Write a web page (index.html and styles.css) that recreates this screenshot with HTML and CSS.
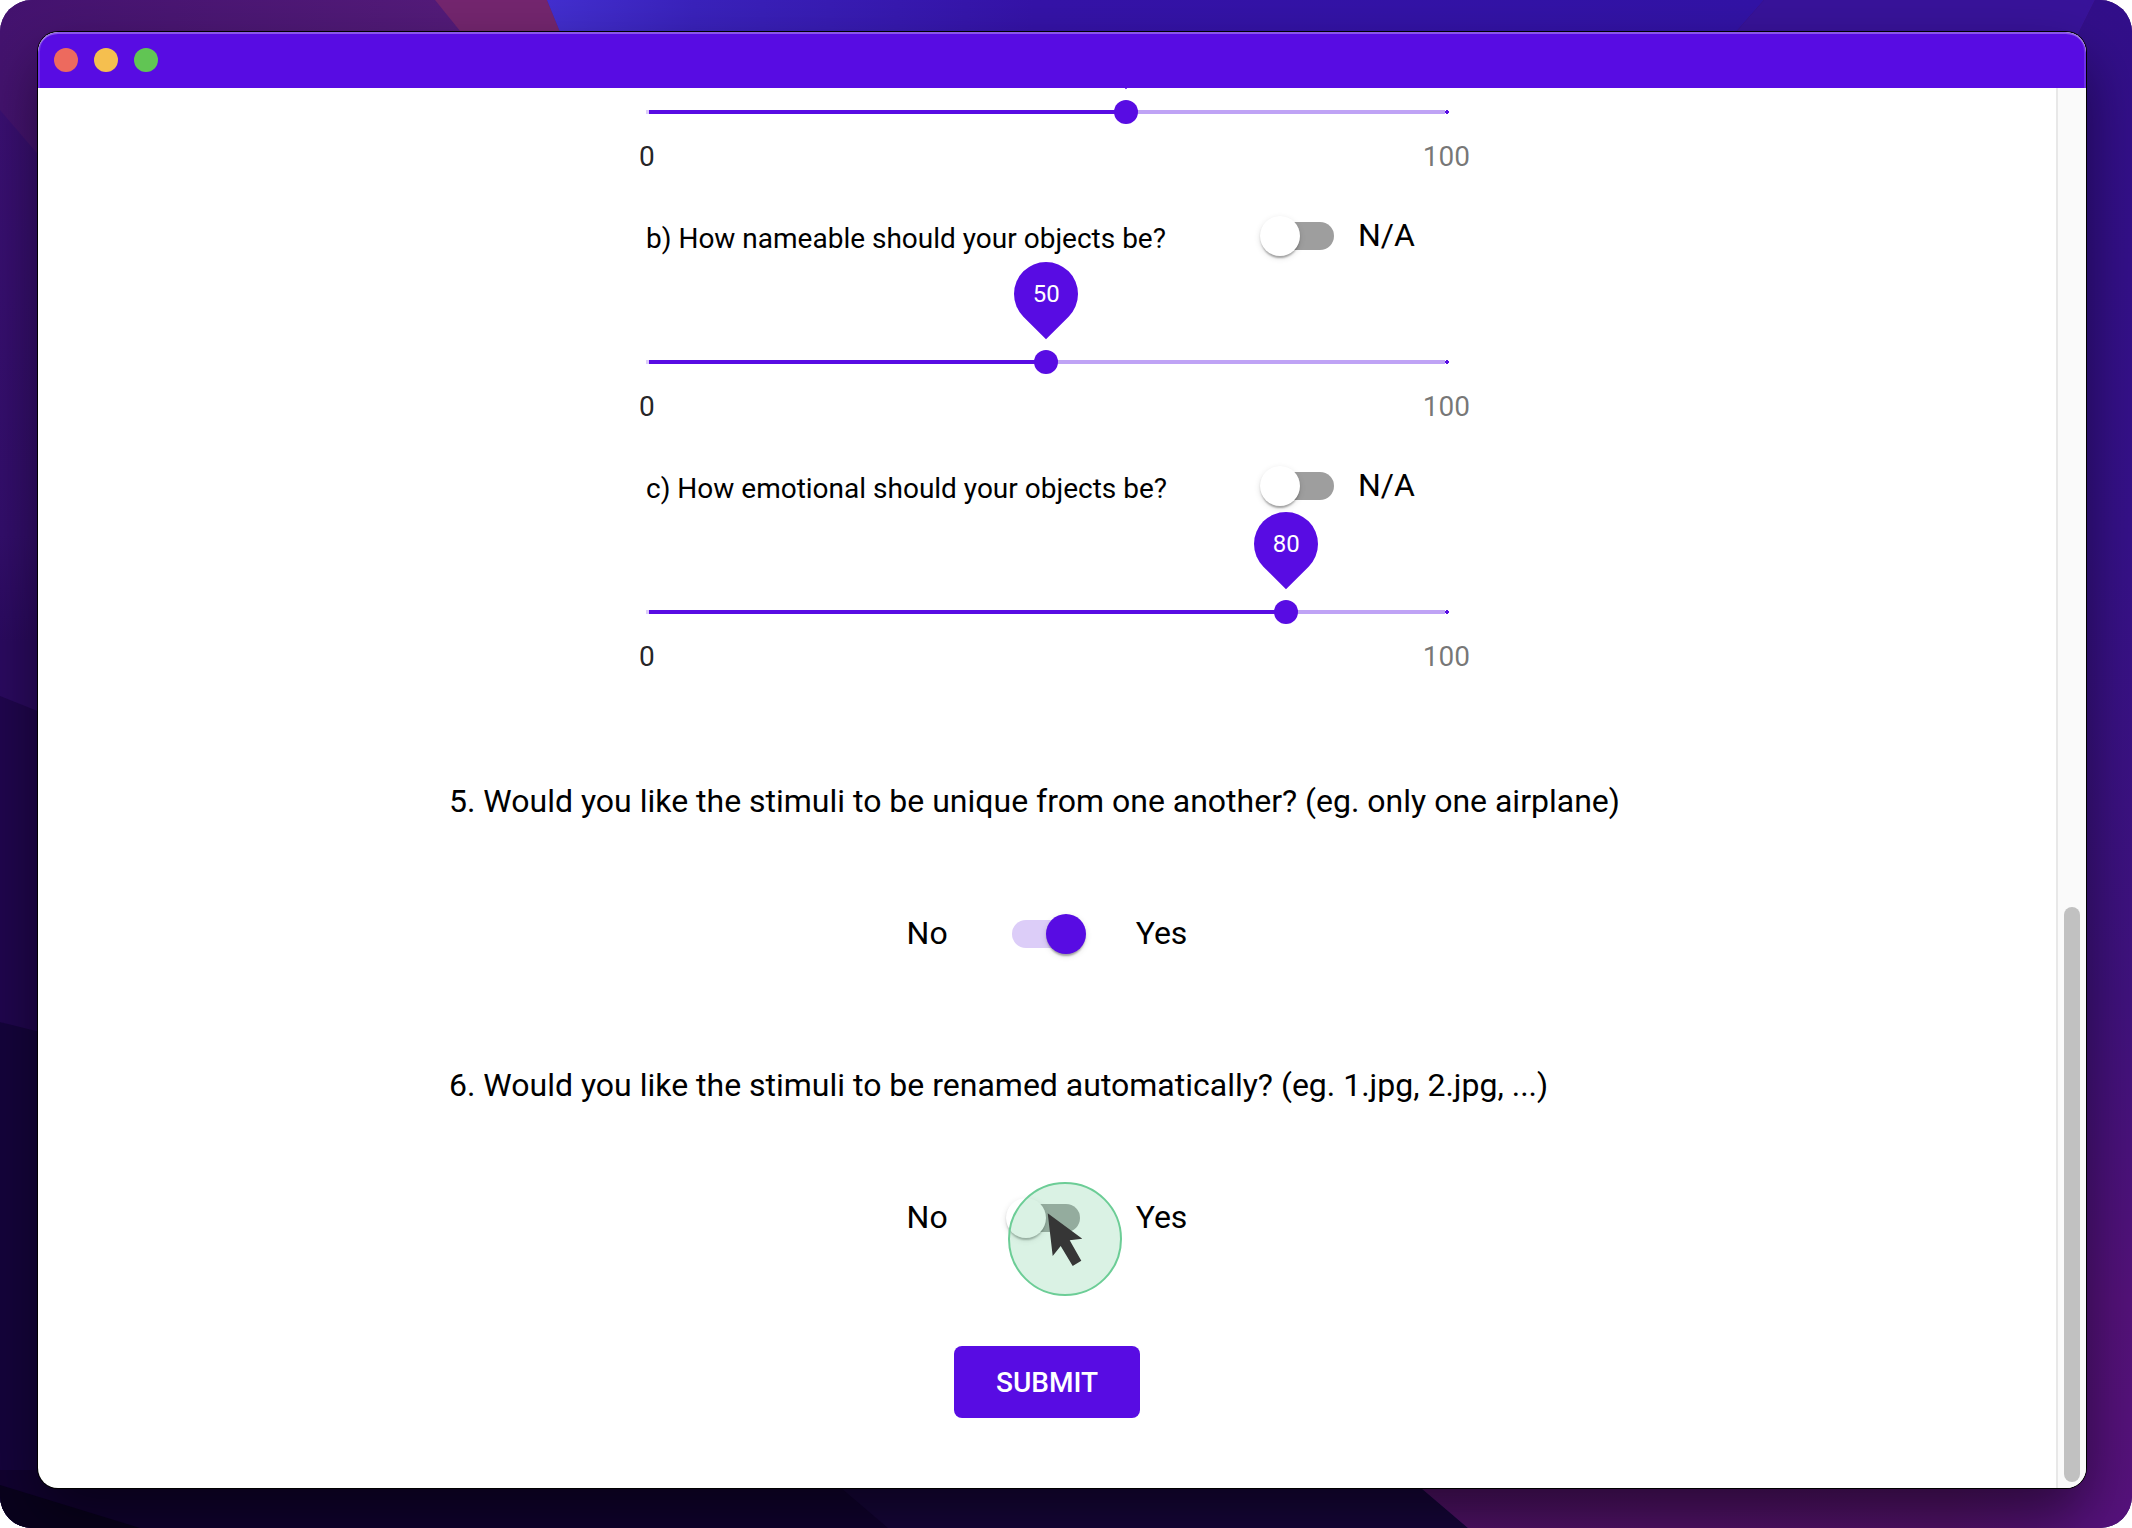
FILE: index.html
```html
<!DOCTYPE html>
<html lang="en">
<head>
<meta charset="utf-8">
<meta name="viewport" content="width=device-width, initial-scale=1">
<title>Stimuli form</title>
<link rel="stylesheet" href="styles.css">
</head>
<body>
<div class="desktop">
  <svg class="wallpaper" viewBox="0 0 2132 1528" preserveAspectRatio="none" aria-hidden="true">
    <defs>
      <linearGradient id="left" x1="0" y1="0" x2="0" y2="1">
        <stop offset="0" stop-color="#3c1074"/>
        <stop offset=".35" stop-color="#330e6c"/>
        <stop offset=".42" stop-color="#2b0a60"/>
        <stop offset="1" stop-color="#2a0a60"/>
      </linearGradient>
      <linearGradient id="plum"><stop offset="0" stop-color="#44136f"/><stop offset="1" stop-color="#571d7c"/></linearGradient>
      <linearGradient id="blue">
        <stop offset="0" stop-color="#432fd0"/>
        <stop offset=".12" stop-color="#3a22bc"/>
        <stop offset=".4" stop-color="#3513a8"/>
        <stop offset="1" stop-color="#3213a6"/>
      </linearGradient>
      <linearGradient id="right" x1="0" y1="0" x2="0" y2="1">
        <stop offset="0" stop-color="#320f8a"/>
        <stop offset=".35" stop-color="#36118a"/>
        <stop offset=".65" stop-color="#40127e"/>
        <stop offset=".85" stop-color="#54127a"/>
        <stop offset="1" stop-color="#56127c"/>
      </linearGradient>
      <linearGradient id="magenta">
        <stop offset="0" stop-color="#52126a"/>
        <stop offset=".8" stop-color="#54126c"/>
        <stop offset="1" stop-color="#56127c"/>
      </linearGradient>
    </defs>
    <rect width="2132" height="1528" fill="url(#left)"/>
    <path d="M0 0H560V250H120L0 110Z" fill="url(#plum)"/>
    <path d="M0 696L60 720V1040L0 1022Z" fill="#20064e"/>
    <path d="M0 1022L60 1037V1528H0Z" fill="#15043c"/>
    <path d="M435 0H547L600 130H540Z" fill="#74266f"/>
    <path d="M547 0H1764L1650 130H600Z" fill="url(#blue)"/>
    <path d="M1764 0H2095L2030 130H1650Z" fill="#38139a"/>
    <path d="M2095 0H2132V1528H1900V400L2030 130Z" fill="url(#right)"/>
    <path d="M0 1470H830L890 1528H0Z" fill="#110230"/>
    <path d="M0 1485L140 1528H0Z" fill="#09021d"/>
    <path d="M820 1470H1400L1468 1528H888Z" fill="#17063c"/>
    <path d="M1400 1470H2086V1528H1468Z" fill="url(#magenta)"/>
  </svg>

  <div class="window">
    <header class="titlebar">
      <button class="light light-close" type="button" aria-label="Close"></button>
      <button class="light light-minimize" type="button" aria-label="Minimize"></button>
      <button class="light light-zoom" type="button" aria-label="Zoom"></button>
    </header>
    <div class="viewport">
      <main class="page">
        <form class="form">
          <div class="ratings">
            <div class="scale">
              <div class="slider" style="--value: 60">
                <input class="range" type="range" min="0" max="100" value="60" aria-label="Rating a">
                <div class="bubble"></div>
              </div>
              <div class="limits"><span>0</span><span class="limit-off">100</span></div>
            </div>

            <div class="rating-head">
              <label class="rating-label" for="nameable">b) How nameable should your objects be?</label>
              <input class="switch" type="checkbox" id="nameable-na">
              <label class="option" for="nameable-na">N/A</label>
            </div>
            <div class="scale">
              <div class="slider" style="--value: 50">
                <input class="range" type="range" id="nameable" min="0" max="100" value="50">
                <output class="bubble" for="nameable"><span class="bubble-text">50</span></output>
              </div>
              <div class="limits"><span>0</span><span class="limit-off">100</span></div>
            </div>

            <div class="rating-head">
              <label class="rating-label" for="emotional">c) How emotional should your objects be?</label>
              <input class="switch" type="checkbox" id="emotional-na">
              <label class="option" for="emotional-na">N/A</label>
            </div>
            <div class="scale">
              <div class="slider" style="--value: 80">
                <input class="range" type="range" id="emotional" min="0" max="100" value="80">
                <output class="bubble" for="emotional"><span class="bubble-text">80</span></output>
              </div>
              <div class="limits"><span>0</span><span class="limit-off">100</span></div>
            </div>
          </div>

          <section class="question">
            <label class="question-text" for="unique">5. Would you like the stimuli to be unique from one another? (eg. only one airplane)</label>
            <div class="choice">
              <span class="option">No</span>
              <div class="choice-switch"><input class="switch" type="checkbox" id="unique" checked></div>
              <span class="option">Yes</span>
            </div>
          </section>

          <section class="question">
            <label class="question-text" for="rename">6. Would you like the stimuli to be renamed automatically? (eg. 1.jpg, 2.jpg, ...)</label>
            <div class="choice">
              <span class="option">No</span>
              <div class="choice-switch">
                <input class="switch" type="checkbox" id="rename">
                <svg class="pointer" viewBox="0 0 114 114" aria-hidden="true">
                  <circle cx="57" cy="57" r="56" fill="rgba(123,207,158,.28)" stroke="#6ccd96" stroke-width="2"/>
                  <path d="M39.7 31.3L74.3 56.7L61.7 58.3L73.3 78.7L64.7 84L52.7 64L44.7 74Z" fill="#363636"/>
                </svg>
              </div>
              <span class="option">Yes</span>
            </div>
          </section>

          <button class="submit" type="submit">SUBMIT</button>
        </form>
      </main>
      <div class="scrollbar" aria-hidden="true"><div class="scrollbar-thumb"></div></div>
    </div>
  </div>
</div>
</body>
</html>
```
FILE: styles.css
```css
:root {
  --primary: #580ce3;
  --primary-light: #bfa3f5;
}

* {
  box-sizing: border-box;
}

body {
  margin: 0;
  background: #fff;
  color: #000;
  font-family: Roboto, "Liberation Sans", sans-serif;
  font-size: 32px;
}

.desktop {
  position: relative;
  display: flex;
  min-height: 100vh;
  padding: 32px 46px 40px 38px;
  overflow: hidden;
  border-radius: 32px;
}

.wallpaper {
  position: absolute;
  inset: 0;
  width: 100%;
  height: 100%;
}

/* App window */

.window {
  position: relative;
  display: flex;
  flex: 1;
  flex-direction: column;
  min-width: 0;
  overflow: hidden;
  border-radius: 20px;
  background: #fff;
  box-shadow: 0 0 0 1px #000, 0 28px 60px rgba(0, 0, 0, .5);
}

.titlebar {
  display: flex;
  align-items: center;
  gap: 16px;
  height: 56px;
  padding: 0 16px;
  border-radius: 20px 20px 0 0;
  background: var(--primary);
  box-shadow: inset 0 2px 0 rgba(255, 255, 255, .3), inset 2px 0 0 rgba(255, 255, 255, .15), inset -2px 0 0 rgba(255, 255, 255, .15);
}

.light {
  width: 24px;
  height: 24px;
  padding: 0;
  border: 0;
  border-radius: 50%;
}

.light-close { background: #ed6a5e; }
.light-minimize { background: #f5bf4f; }
.light-zoom { background: #61c554; }

.viewport {
  display: flex;
  flex: 1;
}

.page {
  flex: 1;
  min-width: 0;
  padding: 12px 24px 70px;
  overflow: hidden;
}

.scrollbar {
  display: flex;
  flex-direction: column;
  justify-content: flex-end;
  width: 30px;
  padding: 6px;
  border-left: 2px solid #e8e8e8;
  background: #fafafa;
}

.scrollbar-thumb {
  height: 41.4%;
  border-radius: 8px;
  background: #c1c1c1;
}

/* Form */

.form {
  display: flex;
  flex-direction: column;
  align-items: center;
  max-width: 1196px;
  margin: 0 auto;
}

.ratings {
  width: 100%;
  max-width: 802px;
  margin-bottom: -2px;
}

.rating-head {
  display: flex;
  align-items: center;
  height: 40px;
  margin: 42px 0 94px;
}

.rating-label {
  width: 614px;
  padding-top: 6px;
  font-size: 28px;
  line-height: 40px;
}

.rating-head .option {
  margin-left: 18px;
}

.option {
  line-height: 38px;
  padding-bottom: 2px;
}

.slider {
  position: relative;
  width: 800px;
  height: 24px;
}

.range {
  display: block;
  width: 824px;
  height: 24px;
  margin: 0 -12px;
  appearance: none;
  background: none;
}

.range::-webkit-slider-runnable-track {
  height: 4px;
  background:
    linear-gradient(#dccdf9, #dccdf9) 12px 0 / 3px 4px no-repeat,
    linear-gradient(var(--primary), var(--primary)) 15px 0 / calc(var(--value) * 8px - 3px) 4px no-repeat,
    radial-gradient(var(--primary) 2px, transparent 2px) 811px 0 / 4px 4px no-repeat,
    linear-gradient(var(--primary-light), var(--primary-light)) 12px 0 / 799px 4px no-repeat;
}

.range::-webkit-slider-thumb {
  width: 24px;
  height: 24px;
  margin-top: -10px;
  appearance: none;
  border-radius: 50%;
  background: var(--primary);
}

.bubble {
  position: absolute;
  bottom: 48px;
  left: calc(var(--value) * 1%);
  display: flex;
  align-items: center;
  justify-content: center;
  width: 64px;
  height: 64px;
  margin-left: -32px;
  border-radius: 50% 50% 50% 0;
  background: var(--primary);
  color: #fff;
  font-size: 24px;
  transform: rotate(-45deg);
}

.bubble-text {
  transform: rotate(45deg);
}

.limits {
  display: flex;
  justify-content: space-between;
  margin: 16px -22px 0 -7px;
  color: rgba(0, 0, 0, .87);
  font-size: 28px;
  line-height: 34px;
}

.limit-off {
  color: rgba(0, 0, 0, .54);
}

.question {
  width: 100%;
  margin-top: 108px;
}

.ratings + .question {
  margin-top: 106px;
}

.question-text {
  display: block;
  margin-bottom: 91px;
  padding-top: 1px;
  line-height: 44px;
}

.choice {
  display: flex;
  align-items: center;
  justify-content: center;
  height: 40px;
}

.choice-switch {
  position: relative;
  margin: 0 50px 0 58px;
}

/* Toggle switch: ::before is the track, ::after the knob */

.switch {
  display: flex;
  align-items: center;
  width: 80px;
  height: 40px;
  margin: 0;
  padding: 6px;
  appearance: none;
  border-radius: 20px;
}

.switch::before {
  content: "";
  flex: none;
  width: 68px;
  height: 28px;
  border-radius: 14px;
  background: #9e9e9e;
}

.switch::after {
  content: "";
  flex: none;
  width: 40px;
  height: 40px;
  margin-left: -74px;
  border-radius: 50%;
  background: #fff;
  box-shadow: 0 4px 2px -2px rgba(0, 0, 0, .2), 0 2px 2px rgba(0, 0, 0, .14), 0 2px 6px rgba(0, 0, 0, .12);
}

.switch:checked::before {
  background: #dccdf8;
}

.switch:checked::after {
  margin-left: -34px;
  background: var(--primary);
}

.pointer {
  position: absolute;
  top: -16px;
  left: 2px;
  width: 114px;
  height: 114px;
}

.submit {
  min-width: 186px;
  height: 72px;
  margin-top: 108px;
  border: 0;
  border-radius: 8px;
  background: var(--primary);
  color: #fff;
  font: 500 28px Roboto, "Liberation Sans", sans-serif;
}
```
